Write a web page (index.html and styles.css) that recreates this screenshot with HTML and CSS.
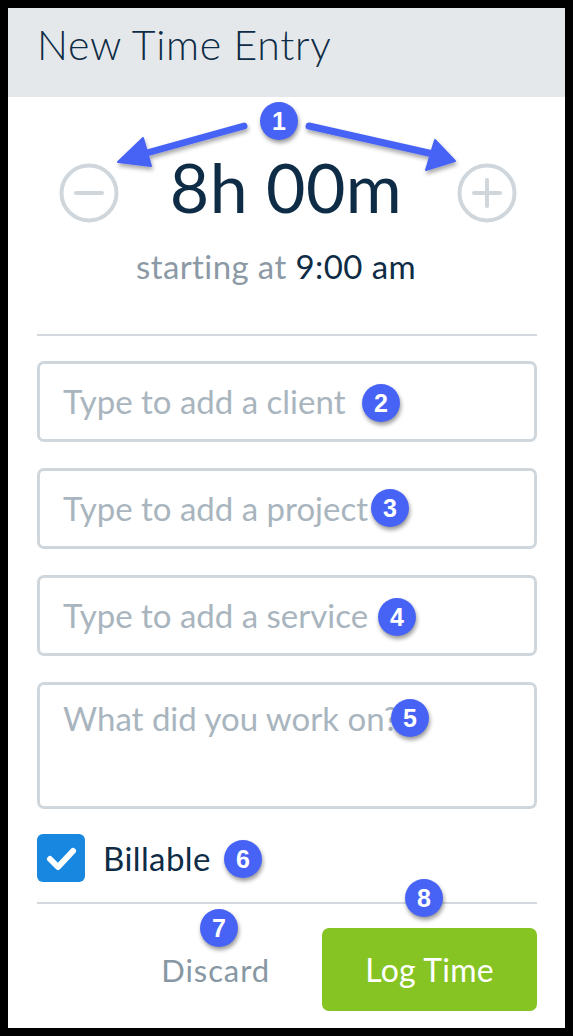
FILE: index.html
```html
<!DOCTYPE html>
<html lang="en">
<head>
<meta charset="utf-8">
<title>New Time Entry</title>
<link rel="stylesheet" href="styles.css">
</head>
<body>
<div class="frame">
  <header class="header"><h1 class="title">New Time Entry</h1></header>
  <main class="content">
    <div class="timer-row">
      <button class="round-btn" aria-label="Decrease">
        <svg viewBox="0 0 60 60" width="60" height="60"><circle cx="30" cy="30" r="27.5" fill="none" stroke="#cfd6dc" stroke-width="4"/><line x1="17" y1="30" x2="43" y2="30" stroke="#cfd6dc" stroke-width="4" stroke-linecap="round"/></svg>
      </button>
      <div class="duration">8h 00m</div>
      <button class="round-btn" aria-label="Increase">
        <svg viewBox="0 0 60 60" width="60" height="60"><circle cx="30" cy="30" r="27.5" fill="none" stroke="#cfd6dc" stroke-width="4"/><line x1="17" y1="30" x2="43" y2="30" stroke="#cfd6dc" stroke-width="4" stroke-linecap="round"/><line x1="30" y1="17" x2="30" y2="43" stroke="#cfd6dc" stroke-width="4" stroke-linecap="round"/></svg>
      </button>
    </div>
    <p class="starting"><span class="muted">starting at</span> <span class="time">9:00 am</span></p>
    <hr class="divider divider-top">
    <div class="fields">
      <div class="field">Type to add a client</div>
      <div class="field">Type to add a project</div>
      <div class="field">Type to add a service</div>
      <div class="field field-tall">What did you work on?</div>
    </div>
    <label class="check-row">
      <span class="checkbox"><svg viewBox="0 0 48 48" width="48" height="48"><path d="M13 25 L21 33 L36 17" fill="none" stroke="#fff" stroke-width="6" stroke-linecap="round" stroke-linejoin="round"/></svg></span>
      <span class="check-label">Billable</span>
    </label>
    <hr class="divider divider-bottom">
    <div class="actions">
      <button class="discard">Discard</button>
      <button class="log">Log Time</button>
    </div>
  </main>

  <svg class="arrows" viewBox="0 0 557 1020" width="557" height="1020" aria-hidden="true">
    <defs>
      <filter id="sh" x="-20%" y="-20%" width="140%" height="140%">
        <feDropShadow dx="1" dy="3" stdDeviation="2" flood-color="#000" flood-opacity="0.35"/>
      </filter>
    </defs>
    <g filter="url(#sh)" fill="#4763f5" stroke="#4763f5">
      <line x1="236" y1="118" x2="135" y2="146" stroke-width="7" stroke-linecap="round"/>
      <polygon points="110,154 135,130 143,158" stroke-width="2" stroke-linejoin="round"/>
      <line x1="301" y1="118" x2="425" y2="146" stroke-width="7" stroke-linecap="round"/>
      <polygon points="447,153 418,162 427,132" stroke-width="2" stroke-linejoin="round"/>
    </g>
  </svg>

  <span class="badge b1">1</span>
  <span class="badge b2">2</span>
  <span class="badge b3">3</span>
  <span class="badge b4">4</span>
  <span class="badge b5">5</span>
  <span class="badge b6">6</span>
  <span class="badge b7">7</span>
  <span class="badge b8">8</span>
</div>
</body>
</html>
```
FILE: styles.css
```css
* { box-sizing: border-box; }
html, body { margin: 0; padding: 0; background: #000; }
body { width: 573px; height: 1036px; padding: 8px; font-family: "Lato", "Open Sans", sans-serif; }

.frame {
  position: relative;
  width: 557px;
  height: 1020px;
  background: #fff;
  overflow: hidden;
}

.header {
  height: 89px;
  background: #e5e8eb;
  padding-left: 29px;
  display: flex;
  align-items: center;
}
.title {
  margin: 0;
  font-weight: 300;
  font-size: 41px;
  letter-spacing: 0.7px;
  line-height: 48px;
  color: #0e2c45;
  padding-bottom: 16px;
}

.content {
  padding: 0 28px 0 29px;
  display: flex;
  flex-direction: column;
}

.timer-row {
  margin-top: 66px;
  display: flex;
  align-items: center;
  justify-content: space-between;
  padding: 0 20px 0 22px;
  height: 60px;
}
.round-btn {
  border: 0;
  background: none;
  padding: 0;
  width: 60px;
  height: 60px;
  display: block;
}
.round-btn svg { display: block; }
.duration {
  font-size: 68px;
  font-weight: 400;
  letter-spacing: 0.5px;
  color: #0e2c45;
  line-height: 1;
  padding-bottom: 12px;
  margin-left: -4px;
}

.starting {
  margin: 26px 0 0;
  padding-right: 22px;
  text-align: center;
  font-size: 33px;
  letter-spacing: 0.4px;
  line-height: 34px;
}
.muted { color: #8c9aa6; }
.time { color: #0e2c45; }

.divider {
  margin: 0;
  border: 0;
  height: 2px;
  background: #d3d9de;
}
.divider-top { margin-top: 51px; }

.fields {
  margin-top: 25px;
  display: flex;
  flex-direction: column;
  gap: 26px;
}
.field {
  height: 81px;
  border: 3px solid #cfd6dc;
  border-radius: 7px;
  padding: 0 0 2px 23px;
  display: flex;
  align-items: center;
  font-size: 33px;
  line-height: 40px;
  color: #a9b5be;
}
.field-tall {
  height: 127px;
  align-items: flex-start;
  padding-top: 13px;
}

.check-row {
  margin-top: 25px;
  display: flex;
  align-items: center;
  gap: 18px;
  height: 48px;
}
.checkbox {
  width: 48px;
  height: 48px;
  border-radius: 6px;
  background: #1787e0;
  display: block;
}
.checkbox svg { display: block; }
.check-label {
  font-size: 33px;
  letter-spacing: 0.4px;
  color: #0e2c45;
}
.divider-bottom { margin-top: 20px; }

.actions {
  margin-top: 24px;
  display: flex;
  justify-content: flex-end;
  align-items: center;
  gap: 52px;
}
.discard {
  border: 0;
  background: none;
  padding: 0;
  font-family: inherit;
  font-size: 31px;
  letter-spacing: 0.9px;
  color: #8797a3;
}
.log {
  width: 215px;
  height: 83px;
  border: 0;
  border-radius: 7px;
  background: #86c423;
  color: #fff;
  font-family: inherit;
  font-size: 32px;
  letter-spacing: 0.2px;
}

.arrows {
  position: absolute;
  left: 0;
  top: 0;
  pointer-events: none;
}

.badge {
  position: absolute;
  width: 38px;
  height: 38px;
  border-radius: 50%;
  background: #4763f5;
  color: #fff;
  font-family: "Liberation Sans", Arial, sans-serif;
  font-weight: 700;
  font-size: 25px;
  line-height: 38px;
  text-align: center;
  box-shadow: 1px 3px 4px rgba(0, 0, 0, 0.4);
}
.b1 { left: 252px; top: 94px; }
.b2 { left: 354px; top: 376px; }
.b3 { left: 363px; top: 481px; }
.b4 { left: 370px; top: 590px; }
.b5 { left: 383px; top: 691px; }
.b6 { left: 216px; top: 832px; }
.b7 { left: 192px; top: 901px; }
.b8 { left: 397px; top: 871px; }
```
